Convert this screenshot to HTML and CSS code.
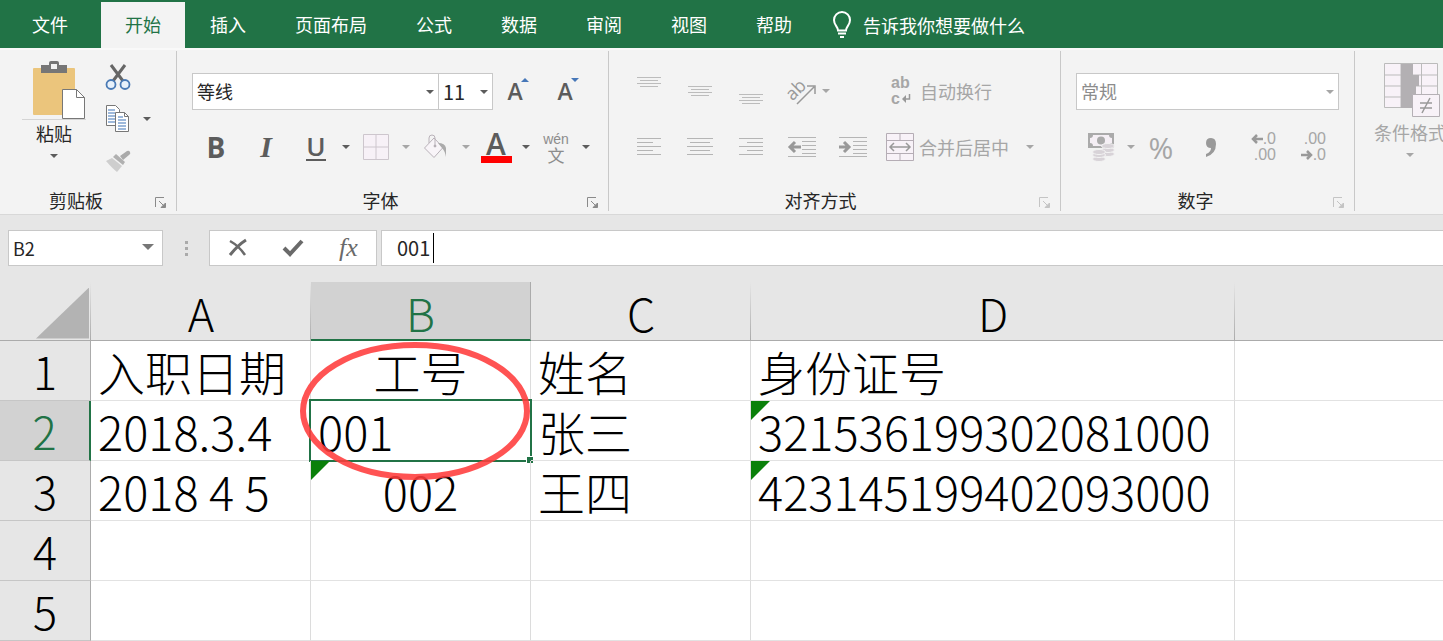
FILE: index.html
```html
<!DOCTYPE html>
<html lang="zh-CN">
<head>
  <meta charset="UTF-8" />
  <meta name="viewport" content="width=device-width, initial-scale=1.0"/>
  <title>Excel</title>
  <link rel="stylesheet" href="styles.css">
</head>
<body>
  <nav class="tabs">
    <button class="tab file">文件</button>
    <button class="tab active">开始</button>
    <button class="tab">插入</button>
    <button class="tab">页面布局</button>
    <button class="tab">公式</button>
    <button class="tab">数据</button>
    <button class="tab">审阅</button>
    <button class="tab">视图</button>
    <button class="tab">帮助</button>
    <button class="tell-me">
      <svg width="20" height="28" viewBox="0 0 20 28" fill="none" stroke="#fff" stroke-width="2">
        <path d="M6 19.500c0-4-4-5-4-10.500a8 8 0 0 1 16 0c0 5.500-4 6.500-4 10.500zM6 22.500h8"/>
        <path d="M8 26h4"/>
      </svg>
      告诉我你想要做什么
    </button>
  </nav>

  <div class="ribbon">
    <section class="group clipboard">
      <div class="group-body">
        <button class="big-btn">
          <svg width="64" height="60" viewBox="0 0 64 60">
            <path d="M0 59.500h64" stroke="#d4d4d4"/>
            <rect x="11" y="8" width="42" height="47" rx="1" fill="#ebc57c"/>
            <path d="M19 5h8V3q0-2 2-2h6q2 0 2 2v2h8v8H19z" fill="#767676"/>
            <rect x="29" y="4" width="6" height="5" fill="#f3f3f3"/>
            <path d="M40.500 29.500h14l8 8v21h-22z" fill="#fff" stroke="#777"/>
            <path d="M54.500 29.500v8h8" fill="none" stroke="#777"/>
          </svg>
          <span>粘贴</span>
          <i class="arrow"></i>
        </button>
        <div class="clip-tools">
          <button class="icon" aria-label="剪切">
            <svg width="26" height="28" viewBox="0 0 26 28">
              <path d="M6 2l12 16M20 2L8 18" fill="none" stroke="#666" stroke-width="3"/>
              <circle cx="6" cy="21.500" r="4.500" fill="#e9f2fb" stroke="#4a7ab5" stroke-width="1.800"/>
              <circle cx="20" cy="21.500" r="4.500" fill="#e9f2fb" stroke="#4a7ab5" stroke-width="1.800"/>
            </svg>
          </button>
          <div class="split">
            <button class="icon" aria-label="复制">
              <svg width="26" height="28" viewBox="0 0 26 28">
                <path d="M1.500.500h9l4 4v16h-13z" fill="#fff" stroke="#777"/>
                <path d="M3 5h7M3 8h7M3 11h7M3 14h7M3 17h7" stroke="#7fa3cf" stroke-width="1.500"/>
                <path d="M10.500 7.500h9l4 4v15h-13z" fill="#fff" stroke="#777"/>
                <path d="M19.500 7.500v4h4" fill="none" stroke="#777"/>
                <path d="M13 12h5M13 15h8M13 18h8M13 21h8M13 24h8" stroke="#7fa3cf" stroke-width="1.500"/>
              </svg>
            </button>
            <button class="arrow" aria-label="复制选项"></button>
          </div>
          <button class="icon" aria-label="格式刷">
            <svg width="26" height="24" viewBox="0 0 26 24">
              <path d="M15 7l7-5q2-1 3 1t-1 3l-6 5z" fill="#aaa"/>
              <path d="M11 5l9 8-2 3-10-8z" fill="#b0b0b0"/>
              <path d="M7 9l10 8-5 6Q8 20 1 12z" fill="#cecece"/>
            </svg>
          </button>
        </div>
      </div>
      <div class="group-name">剪贴板<button class="launcher" aria-label="剪贴板设置"><svg width="12" height="12" viewBox="0 0 12 12"><path d="M.500 10V.500H9" fill="none" stroke="currentColor"/><path d="M4 4l5 5M10.500 6v4.500H6z" fill="currentColor" stroke="currentColor"/></svg></button></div>
    </section>

    <section class="group font">
      <div class="group-body">
        <div class="row">
          <div class="picker font-name"><select aria-label="字体"><option>等线</option></select></div>
          <div class="picker font-size"><select aria-label="字号"><option>11</option></select></div>
          <button class="icon grow-a">A<svg width="8" height="4" viewBox="0 0 8 4"><path d="M0 4l4-4 4 4z" fill="#4677b8"/></svg></button>
          <button class="icon grow-a">A<svg width="8" height="4" viewBox="0 0 8 4"><path d="M0 0h8L4 4z" fill="#4677b8"/></svg></button>
        </div>
        <div class="row">
          <button class="icon bold">B</button>
          <button class="icon italic">I</button>
          <div class="split">
            <button class="icon underline"><span>U</span></button>
            <button class="arrow" aria-label="下划线选项"></button>
          </div>
          <div class="split off">
            <button class="icon" aria-label="边框">
              <svg width="26" height="26" viewBox="0 0 26 26" fill="#f7f1f7" stroke="#cdc6cd"><path d="M.500.500h25v25H.500zM13 .500v25M.500 13h25"/></svg>
            </button>
            <button class="arrow" aria-label="边框选项"></button>
          </div>
          <div class="split off">
            <button class="icon" aria-label="填充颜色">
              <svg width="26" height="26" viewBox="0 0 26 26" fill="none" stroke="#b9b2b9"><path d="M11 4L1.500 14 11 23.500 20 13.500z" fill="#f8f4f8"/><path d="M6 9V4q0-3 3-3t3 3v7"/><circle cx="12" cy="12" r="1" fill="#999"/><path d="M15 9q7 0 8 5v9q-1-6-4-9z" fill="#aaa" stroke="none"/></svg>
            </button>
            <button class="arrow" aria-label="填充选项"></button>
          </div>
          <div class="split">
            <button class="icon font-color"><span>A</span></button>
            <button class="arrow" aria-label="颜色选项"></button>
          </div>
          <div class="split">
            <button class="icon pinyin"><span>wén</span><span class="han">文</span></button>
            <button class="arrow" aria-label="拼音选项"></button>
          </div>
        </div>
      </div>
      <div class="group-name">字体<button class="launcher" aria-label="字体设置"><svg width="12" height="12" viewBox="0 0 12 12"><path d="M.500 10V.500H9" fill="none" stroke="currentColor"/><path d="M4 4l5 5M10.500 6v4.500H6z" fill="currentColor" stroke="currentColor"/></svg></button></div>
    </section>

    <section class="group align">
      <div class="group-body off">
        <button class="icon" aria-label="顶端对齐"><svg width="26" height="32" viewBox="0 0 26 32" stroke="#bcbcbc"><path d="M1 2.500h24M4 5.500h18M1 8.500h24M4 11.500h18"/></svg></button>
        <button class="icon" aria-label="垂直居中"><svg width="26" height="32" viewBox="0 0 26 32" stroke="#bcbcbc"><path d="M1 11.500h24M4 14.500h18M1 17.500h24M4 20.500h18"/></svg></button>
        <button class="icon" aria-label="底端对齐"><svg width="26" height="32" viewBox="0 0 26 32" stroke="#bcbcbc"><path d="M1 19.500h24M4 22.500h18M1 25.500h24M4 28.500h18"/></svg></button>
        <div class="split orient">
          <button class="icon" aria-label="方向">
            <svg width="30" height="30" viewBox="0 0 30 30"><text x="-1" y="20" class="glyph-ab" transform="rotate(-45 9 15)">ab</text><path d="M10 28L27 11M20 10h8v8" fill="none" stroke="#999" stroke-width="1.500"/></svg>
          </button>
          <button class="arrow" aria-label="方向选项"></button>
        </div>
        <button class="text-btn">
          <span class="wrap-icon"><span>ab</span><span>c<svg width="10" height="10" viewBox="0 0 10 10"><path d="M8.500 0v5H4" fill="none" stroke="#999" stroke-width="1.500"/><path d="M5 1L1 5l4 4z" fill="#999"/></svg></span></span>
          自动换行
        </button>
        <button class="icon" aria-label="左对齐"><svg width="26" height="20" viewBox="0 0 26 20" stroke="#b5b5b5"><path d="M1 1.500h24M1 5.500h16M1 9.500h24M1 13.500h16M1 17.500h24"/></svg></button>
        <button class="icon" aria-label="居中"><svg width="26" height="20" viewBox="0 0 26 20" stroke="#b5b5b5"><path d="M0 1.500h26M3 5.500h20M0 9.500h26M3 13.500h20M0 17.500h26"/></svg></button>
        <button class="icon" aria-label="右对齐"><svg width="26" height="20" viewBox="0 0 26 20" stroke="#b5b5b5"><path d="M1 1.500h24M9 5.500h16M1 9.500h24M9 13.500h16M1 17.500h24"/></svg></button>
        <button class="icon" aria-label="减少缩进"><svg width="30" height="22" viewBox="0 0 30 22" stroke="#b5b5b5"><path d="M1 1.500h28M15 5.500h14M15 9.500h14M15 13.500h14M15 17.500h14M1 20.500h28"/><path d="M14 11H3M8 6l-5 5 5 5" fill="none" stroke="#999" stroke-width="3"/></svg></button>
        <button class="icon" aria-label="增加缩进"><svg width="30" height="22" viewBox="0 0 30 22" stroke="#b5b5b5"><path d="M1 1.500h28M15 5.500h14M15 9.500h14M15 13.500h14M15 17.500h14M1 20.500h28"/><path d="M1 11h10M6 6l5 5-5 5" fill="none" stroke="#999" stroke-width="3"/></svg></button>
        <div class="split">
          <button class="text-btn">
            <svg width="28" height="28" viewBox="0 0 28 28" fill="none" stroke="#b5adb5"><path d="M.500.500h27v27H.500zM.500 7.500h27M.500 20.500h27M14 .500v7M14 20.500v7" fill="#f8f2f8"/><path d="M4 14h20M8 10l-4 4 4 4M20 10l4 4-4 4" stroke="#999" stroke-width="1.500"/></svg>
            合并后居中
          </button>
          <button class="arrow" aria-label="合并选项"></button>
        </div>
      </div>
      <div class="group-name">对齐方式<button class="launcher off" aria-label="对齐设置"><svg width="12" height="12" viewBox="0 0 12 12"><path d="M.500 10V.500H9" fill="none" stroke="currentColor"/><path d="M4 4l5 5M10.500 6v4.500H6z" fill="currentColor" stroke="currentColor"/></svg></button></div>
    </section>

    <section class="group number">
      <div class="group-body off">
        <div class="row">
          <div class="picker number-format"><select aria-label="数字格式"><option>常规</option></select></div>
        </div>
        <div class="row">
          <div class="split">
            <button class="icon" aria-label="会计数字格式">
              <svg width="28" height="30" viewBox="0 0 28 30"><path d="M1 1h26v15H1z" fill="#aaa"/><path d="M6 3h16q0 3 3 3v5q-3 0-3 3H6q0-3-3-3V6q3 0 3-3" fill="#f5eff5"/><circle cx="14" cy="8.500" r="4" fill="#aaa"/><g fill="#d8d3d8" stroke="#f3f3f3"><ellipse cx="21" cy="22" rx="6.500" ry="2.500"/><ellipse cx="21" cy="18" rx="6.500" ry="2.500"/><ellipse cx="21" cy="14" rx="6.500" ry="2.500"/><ellipse cx="12" cy="27" rx="6.500" ry="2.500"/><ellipse cx="12" cy="23" rx="6.500" ry="2.500"/><ellipse cx="12" cy="20" rx="6.500" ry="2.500"/></g></svg>
            </button>
            <button class="arrow" aria-label="会计格式选项"></button>
          </div>
          <button class="icon percent">%</button>
          <button class="icon" aria-label="千位分隔样式"><svg width="14" height="20" viewBox="0 0 14 20"><path d="M2 17q5-2 5-6-5 0-5-5t5-5 5 6q0 10-10 13z" fill="#999"/></svg></button>
          <button class="icon decimals"><span><svg width="12" height="10" viewBox="0 0 12 10"><path d="M2 5h10M6 1L2 5l4 4" fill="none" stroke="#999" stroke-width="2.500"/></svg>.0</span><span>.00</span></button>
          <button class="icon decimals"><span>.00</span><span><svg width="12" height="10" viewBox="0 0 12 10"><path d="M0 5h10M6 1l4 4-4 4" fill="none" stroke="#999" stroke-width="2.500"/></svg>.0</span></button>
        </div>
      </div>
      <div class="group-name">数字<button class="launcher off" aria-label="数字设置"><svg width="12" height="12" viewBox="0 0 12 12"><path d="M.500 10V.500H9" fill="none" stroke="currentColor"/><path d="M4 4l5 5M10.500 6v4.500H6z" fill="currentColor" stroke="currentColor"/></svg></button></div>
    </section>

    <section class="group styles">
      <div class="group-body off">
        <button class="big-btn">
          <svg width="60" height="56" viewBox="0 0 60 56">
            <path d="M4.500.500h53v44h-53zM4.500 12h53M4.500 23h53M4.500 34h53M21 .500v44M41.500.500v44" fill="#f8f2f8" stroke="#bbb"/>
            <path d="M21 1h12v11h6v11h-3v11h-4v11H21z" fill="#b3b0b3"/>
            <path d="M32.500 31.500h27v22h-27z" fill="#f8f2f8" stroke="#b5b0b5"/>
            <path d="M40 40h12M40 45h12M50 35l-8 15" stroke="#999" stroke-width="1.500"/>
          </svg>
          <span>条件格式</span>
          <i class="arrow"></i>
        </button>
      </div>
    </section>
  </div>

  <div class="formula-bar">
    <div class="picker name-box"><select aria-label="名称框"><option>B2</option></select></div>
    <div class="dots"><i></i><i></i><i></i></div>
    <div class="formula-tools">
      <button aria-label="取消"><svg width="20" height="18" viewBox="0 0 20 18" fill="none" stroke="#6a6a6a"><path d="M2 2q9 5 15 14" stroke-width="2.500"/><path d="M18 1Q10 6 2 16" stroke-width="3"/></svg></button>
      <button aria-label="输入"><svg width="20" height="18" viewBox="0 0 20 18" fill="none" stroke="#6a6a6a" stroke-width="4"><path d="M1 9l6 6L19 2"/></svg></button>
      <button class="fx">fx</button>
    </div>
    <div class="formula-input">
      <input type="text" value="001" aria-label="编辑栏">
      <i class="caret"></i>
    </div>
  </div>

  <div class="sheet">
    <table>
      <colgroup><col class="c-head"><col class="c-std"><col class="c-std"><col class="c-std"><col class="c-wide"><col></colgroup>
      <thead>
        <tr><th class="corner"></th><th>A</th><th class="selected">B</th><th>C</th><th>D</th><th></th></tr>
      </thead>
      <tbody>
        <tr><th>1</th><td>入职日期</td><td class="center">工号</td><td>姓名</td><td>身份证号</td><td></td></tr>
        <tr><th class="selected">2</th><td>2018.3.4</td><td class="editing">001</td><td>张三</td><td class="warn">321536199302081000</td><td></td></tr>
        <tr><th>3</th><td>2018 4 5</td><td class="center warn">002</td><td>王四</td><td class="warn">423145199402093000</td><td></td></tr>
        <tr><th>4</th><td></td><td></td><td></td><td></td><td></td></tr>
        <tr><th>5</th><td></td><td></td><td></td><td></td><td></td></tr>
      </tbody>
    </table>
    <svg class="mark" width="232" height="140" viewBox="0 0 232 140"><ellipse cx="116" cy="70" rx="112" ry="66" fill="none" stroke="#ff3b3b" stroke-opacity=".88" stroke-width="6"/></svg>
  </div>
</body>
</html>
```
FILE: styles.css
```css
:root {
  --green: #217346;
  --ribbon: #f3f3f3;
  --chrome: #e6e6e6;
  --ink: #262626;
  --icon: #5c5c5c;
  --off: #a6a6a6;
  --line: #c8c8c8;
}

* {
  box-sizing: border-box;
}

body {
  margin: 0;
  font-family: 'Noto Sans CJK SC', sans-serif;
  font-size: 18px;
  color: var(--ink);
  background: #fff;
  overflow: hidden;
}

button,
select,
input {
  font: inherit;
  color: inherit;
  border: none;
  background: none;
  padding: 0;
  margin: 0;
}

svg {
  display: block;
  flex: none;
  overflow: visible;
}

/* tabs */
.tabs {
  display: flex;
  gap: 1px;
  height: 48px;
  padding-top: 2px;
  background: var(--green);
  color: #fff;
}

.tab {
  padding: 0 24px 2px;
  white-space: nowrap;
}

.tab.file {
  width: 100px;
}

.tab.active {
  background: var(--ribbon);
  color: var(--green);
}

.tell-me {
  display: flex;
  align-items: center;
  gap: 11px;
  padding-left: 15px;
  white-space: nowrap;
}

/* ribbon */
.ribbon {
  display: flex;
  height: 166px;
  padding: 1px 0 3px;
  border-top: 2px solid #f9f9f9;
  background: var(--ribbon);
  overflow: hidden;
}

.group {
  display: flex;
  flex-direction: column;
  flex: none;
  border-right: 1px solid var(--line);
}

.group-body {
  flex: 1;
  padding: 20px 14px 0;
}

.group-name {
  position: relative;
  height: 22px;
  line-height: 22px;
  text-align: center;
}

.launcher {
  position: absolute;
  right: 9px;
  bottom: 2px;
  color: #8a8a8a;
}

.launcher.off {
  color: #c4c4c4;
}

.clipboard {
  width: 177px;
}

.clipboard .group-name {
  padding-right: 24px;
}

.clipboard .group-body {
  display: flex;
  padding: 9px 0 0 22px;
}

.font {
  width: 432px;
}

.font .group-name {
  padding-right: 24px;
}

.align {
  width: 452px;
}

.align .group-name {
  padding-right: 28px;
}

.number {
  width: 294px;
}

.number .group-name {
  padding-right: 24px;
}

.number .group-body {
  padding-left: 15px;
}

.styles {
  border-right: none;
}

.styles .group-body {
  padding: 12px 0 0 19px;
}

.big-btn {
  display: flex;
  flex-direction: column;
  align-items: center;
  line-height: 26px;
  white-space: nowrap;
}

.big-btn .arrow {
  height: 20px;
}

.clip-tools {
  display: flex;
  flex-direction: column;
  gap: 2px;
  padding-left: 7px;
  margin-top: -3px;
}

.row {
  display: flex;
  align-items: center;
  height: 40px;
  margin-bottom: 16px;
}

.icon {
  display: flex;
  align-items: center;
  justify-content: center;
  width: 50px;
  height: 40px;
  color: var(--icon);
}

.split {
  display: flex;
  align-items: center;
}

.arrow {
  display: flex;
  align-items: center;
  justify-content: center;
  width: 8px;
  height: 32px;
  color: var(--icon);
}

.arrow::after,
.picker::after {
  content: '';
  border: 4px solid transparent;
  border-top-color: currentColor;
  border-bottom: none;
}

.row .arrow,
.align .arrow {
  width: 10px;
}

.off,
.off .icon,
.off .arrow {
  color: var(--off);
}

.picker {
  position: relative;
  height: 37px;
  border: 1px solid var(--line);
  background: #fff;
}

.picker select {
  width: 100%;
  height: 100%;
  padding: 0 4px;
  appearance: none;
  outline: none;
}

.picker::after {
  position: absolute;
  right: 4px;
  top: 16px;
  color: var(--icon);
  pointer-events: none;
}

.off .picker::after {
  color: var(--off);
}

.off .picker {
  color: #8c8c8c;
}

.font-name {
  width: 247px;
  margin-left: 1px;
}

.font-size {
  width: 54px;
  border-left: none;
}

.font-size select {
  font-size: 20px;
}

.number-format {
  width: 263px;
}

.grow-a {
  font: 600 23px 'Open Sans', sans-serif;
}

.grow-a svg {
  margin: 0 0 22px -2px;
}

.glyph-ab {
  font: 18px 'Open Sans', sans-serif;
  fill: #999;
}

.wrap-icon {
  display: flex;
  flex-direction: column;
  width: 24px;
  font: bold 16px/16px 'Liberation Sans', sans-serif;
}

.wrap-icon span {
  display: flex;
  align-items: center;
}

.wrap-icon svg {
  margin-left: 1px;
}

.decimals {
  flex-direction: column;
  align-items: flex-end;
  padding-right: 10px;
  font: 16px/16px 'Liberation Sans', sans-serif;
}

.decimals span {
  display: flex;
  align-items: center;
}

.bold {
  font: bold 28px 'Open Sans', sans-serif;
}

.italic {
  font: italic bold 30px 'Liberation Serif', serif;
}

.underline {
  font: 600 26px/26px 'Open Sans', sans-serif;
}

.underline span {
  border-bottom: 2px solid var(--icon);
}

.font-color {
  font: 600 30px/24px 'Open Sans', sans-serif;
}

.font-color span {
  width: 31px;
  height: 32px;
  padding-top: 1px;
  border-bottom: 7px solid #f00;
}

.pinyin {
  flex-direction: column;
  font: 14px/14px 'Liberation Sans', sans-serif;
  color: #8c8c8c;
}

.pinyin .han {
  font: 17px/17px 'Noto Sans CJK SC', sans-serif;
}

.percent {
  font: 30px 'Open Sans', sans-serif;
}

.align .group-body {
  display: grid;
  grid-template-columns: repeat(5, 51px) 1fr;
  grid-template-rows: 40px 40px;
  row-gap: 16px;
  padding-left: 15px;
  padding-right: 0;
}

.orient {
  grid-column: span 2;
}

.orient .arrow {
  margin-left: -6px;
}

.text-btn {
  display: flex;
  align-items: center;
  gap: 5px;
  padding-left: 7px;
  white-space: nowrap;
}

.align .group-body > .text-btn {
  padding-left: 12px;
}

.align .text-btn + .arrow {
  margin-left: 16px;
}

/* formula bar */
.formula-bar {
  display: flex;
  height: 68px;
  padding: 15px 0 0 8px;
  border-top: 1px solid #d8d8d8;
  background: var(--chrome);
}

.name-box {
  width: 155px;
  height: 36px;
}

.name-box::after {
  right: 8px;
  top: 13px;
  border-width: 6px;
  border-bottom: none;
  color: #777;
}

.dots {
  display: flex;
  flex-direction: column;
  justify-content: center;
  align-items: center;
  gap: 3px;
  width: 46px;
  height: 36px;
}

.dots i {
  width: 3px;
  height: 3px;
  background: #aaa;
}

.formula-tools {
  display: flex;
  width: 168px;
  height: 36px;
  border: 1px solid var(--line);
  background: #fff;
}

.formula-tools button {
  display: flex;
  flex: 1;
  align-items: center;
  justify-content: center;
}

.fx {
  font: italic 26px 'Liberation Serif', serif;
  color: #6a6a6a;
}

.formula-input {
  position: relative;
  flex: 1;
  height: 36px;
  margin-left: 4px;
  border: 1px solid var(--line);
  border-right: none;
  background: #fff;
}

.formula-input input {
  width: 100%;
  height: 100%;
  padding: 0 0 2px 15px;
  font-size: 20px;
  outline: none;
}

.caret {
  position: absolute;
  left: 51px;
  top: 2px;
  width: 1px;
  height: 30px;
  background: #000;
}

/* sheet */
.sheet {
  position: relative;
}

table {
  width: 100%;
  table-layout: fixed;
  border-collapse: separate;
  border-spacing: 0;
  font-size: 47px;
  font-weight: 300;
  line-height: 50px;
  color: #000;
}

.c-head {
  width: 91px;
}

.c-std {
  width: 220px;
}

.c-wide {
  width: 484px;
}

th {
  height: 60px;
  padding: 0;
  font-size: 45px;
  font-weight: 300;
  background: var(--chrome);
  border-right: 1px solid #ababab;
  border-bottom: 1px solid #c6c6c6;
}

thead th {
  height: 59px;
  padding-top: 4px;
  border-right: none;
  border-bottom-color: #ababab;
  background: linear-gradient(var(--chrome), #ababab) right / 1px 100% no-repeat var(--chrome);
}

thead th:last-child {
  background: var(--chrome);
}

.corner::after {
  content: '';
  display: block;
  width: 53px;
  height: 51px;
  margin: 0 2px 0 auto;
  background: #b3b3b3;
  clip-path: polygon(100% 0, 100% 100%, 0 100%);
}

th.selected {
  background: #d2d2d2;
  color: var(--green);
  border-right: 2px solid var(--green);
}

thead th.selected {
  border-right: 1px solid #ababab;
  border-bottom: 2px solid var(--green);
}

td {
  position: relative;
  height: 60px;
  padding: 0 7px;
  white-space: nowrap;
  border-right: 1px solid #dcdcdc;
  border-bottom: 1px solid #e2e2e2;
}

td:last-child {
  border-right: none;
}

td.center {
  text-align: center;
}

td.warn::before {
  content: '';
  position: absolute;
  left: 0;
  top: 0;
  width: 19px;
  height: 19px;
  background: #0a800a;
  clip-path: polygon(0 0, 100% 0, 0 100%);
}

td.editing::before {
  content: '';
  position: absolute;
  inset: -2px;
  border: 2px solid var(--green);
}

td.editing::after {
  content: '';
  position: absolute;
  right: -3px;
  bottom: -3px;
  width: 6px;
  height: 6px;
  border: solid #fff;
  border-width: 1px 0 0 1px;
  background: var(--green);
}

/* red ring round the edited cells */
.mark {
  position: absolute;
  left: 299px;
  top: 59px;
  pointer-events: none;
}
```
